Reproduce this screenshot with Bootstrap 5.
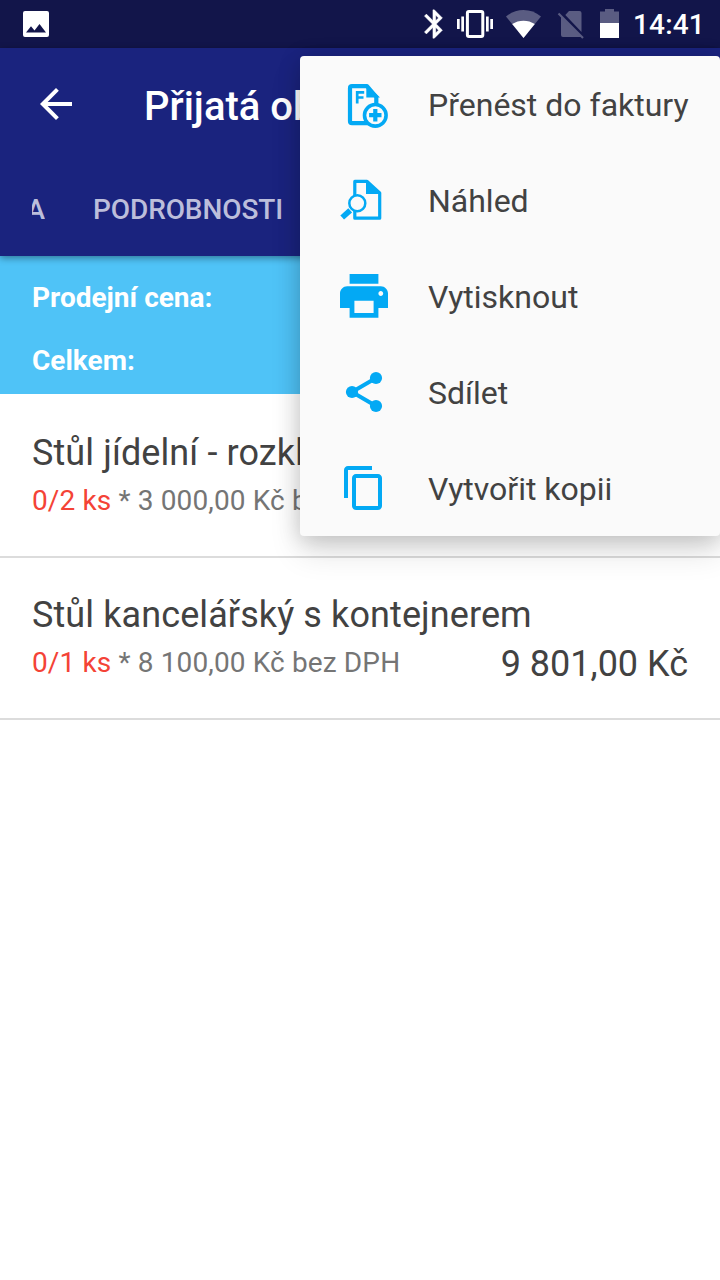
<!DOCTYPE html>
<html lang="cs">
<head>
<meta charset="utf-8">
<meta name="viewport" content="width=device-width, initial-scale=1">
<title>Přijatá objednávka</title>
<link href="https://cdn.jsdelivr.net/npm/bootstrap@5.3.0/dist/css/bootstrap.min.css" rel="stylesheet">
<style>
body{font-family:Roboto,"Noto Sans",sans-serif;color:#424242;width:720px;height:1280px;overflow:hidden;background:#fff}
svg{display:block;flex:none}
.statusbar{height:48px;background:#12154a;color:#fff;padding:0 17px 0 22px}
.clock{font-size:28px;letter-spacing:.15px;font-weight:500;line-height:48px;padding-top:2px;width:70px;white-space:nowrap;margin-left:12px}
.appbar{height:208px;background:#1a237e;color:#fff;box-shadow:0 2px 7px rgba(0,0,0,.4);z-index:1}
.toolbar{height:112px;padding-left:32px;gap:64px}
.screen-title{font-size:40px;font-weight:500;line-height:48px;padding-top:6px}
.tabstrip{height:96px;padding:2px 0 0 32px;font-size:28px;letter-spacing:-.1px;font-weight:500;color:#bcbedb;line-height:96px}
.tab-cut{width:13px;overflow:hidden;direction:rtl}
.tab-next{margin-left:48px}
.totals{height:138px;background:#4fc3f7;color:#fff;font-size:28px;font-weight:700;line-height:33px;padding:25px 32px 0}
.order-row{border-bottom:2px solid #dcdcdc;padding:37px 32px 0}
.item-name{font-size:36px;letter-spacing:.1px;line-height:44px;white-space:nowrap}
.item-sub{font-size:28px;letter-spacing:.13px;line-height:34px;color:#757575;margin-top:9px;white-space:nowrap}
.qty{color:#f44336}
.item-total{font-size:36px;line-height:42px;margin-top:6px}
.popup{top:56px;left:300px;width:420px;height:480px;background:#fafafa;border-radius:4px;z-index:5;box-shadow:0 16px 32px rgba(0,0,0,.12),0 3px 22px rgba(0,0,0,.18)}
.popup-row{height:96px;padding-left:36px;gap:36px;font-size:32px;white-space:nowrap;line-height:40px}
.popup-row span{padding-top:2px}
.popup svg{color:#03a9f4}
</style>
</head>
<body class="position-relative">
<div class="statusbar d-flex align-items-center">
  <svg class="me-auto" width="28" height="28" viewBox="0 0 28 28"><path fill="#fff" fill-rule="evenodd" d="M3 1h22a2 2 0 0 1 2 2v22a2 2 0 0 1-2 2H3a2 2 0 0 1-2-2V3a2 2 0 0 1 2-2zM4 22.500h20L17.500 14l-5 6.500L9 16.200z"/></svg>
  <svg width="20" height="48" viewBox="423 0 20 48"><path fill="#fff" stroke="#fff" stroke-width=".3" transform="translate(417.300 7) scale(1.420)" d="M17.710 7.710L12 2h-1v7.590L6.410 5 5 6.410 10.590 12 5 17.590 6.410 19 11 14.410V22h1l5.710-5.710-4.300-4.290zM13 5.830l1.880 1.880L13 9.590zm1.880 10.460L13 18.170v-3.760z"/></svg>
  <svg class="ms-2" style="margin-right:7px" width="48" height="48" viewBox="451 0 48 48" fill="#fff"><rect x="467.400" y="11.400" width="15.400" height="25.200" rx="1.500" fill="none" stroke="#fff" stroke-width="3"/><path d="M457 19h2.700v10H457zM461.300 16.500h2.700v15h-2.700zM486 16.500h2.700v15H486zM490.300 19h2.700v10h-2.700z"/></svg>
  <svg width="36" height="48" viewBox="506 0 36 48"><path fill="#5a5c82" d="M523.500 38L506 16.500c10-8.600 25-8.600 35 0z"/><path fill="#fff" d="M523.500 38l-11.300-13.900c6.600-4.500 16-4.500 22.600 0z"/></svg>
  <svg style="margin-left:15px" width="28" height="48" viewBox="557 0 28 48"><path fill="#5a5c82" d="M569 11h10.500a2 2 0 0 1 2 2v19L565.300 15zM561 16l21 21h-19a2 2 0 0 1-2-2z"/><path stroke="#5a5c82" stroke-width="2.200" d="M558.500 13.500l24.500 24.500"/></svg>
  <svg style="margin-left:15px;margin-right:2px" width="19" height="48" viewBox="600 0 19 48"><path fill="#5a5c82" d="M600 11.500h5V9h9v2.500h5V23h-19z"/><path fill="#fff" d="M600 23h19v15h-19z"/></svg>
  <span class="clock">14:41</span>
</div>
<header class="appbar position-relative">
  <div class="toolbar d-flex align-items-center">
    <svg width="48" height="48" viewBox="0 0 24 24"><path fill="#fff" d="M20 11H7.830l5.590-5.590L12 4l-8 8 8 8 1.410-1.410L7.830 13H20z"/></svg>
    <div class="screen-title text-nowrap">Přijatá ob</div>
  </div>
  <nav class="tabstrip d-flex"><div class="tab-cut">A</div><div class="tab-next">PODROBNOSTI</div></nav>
</header>
<section class="totals"><div>Prodejní cena:</div><div style="margin-top:30px">Celkem:</div></section>
<main>
  <div class="order-row" style="height:164px">
    <div class="item-name">Stůl jídelní - rozkl</div>
    <div class="item-sub"><span class="qty">0/2 ks</span> * 3 000,00 Kč b</div>
  </div>
  <div class="order-row" style="height:162px;padding-top:35px">
    <div class="item-name">Stůl kancelářský s kontejnerem</div>
    <div class="d-flex justify-content-between"><div class="item-sub"><span class="qty">0/1 ks</span> * 8 100,00 Kč bez DPH</div><div class="item-total">9 801,00 Kč</div></div>
  </div>
</main>
<div class="popup position-absolute">
  <div class="popup-row d-flex align-items-center">
    <svg width="56" height="56" viewBox="0 0 56 56"><path fill="none" stroke="currentColor" stroke-width="4.200" stroke-linejoin="round" d="M31 10.200H16a2 2 0 0 0-2 2v33a2 2 0 0 0 2 2h24.300V21z"/><path fill="currentColor" d="M30.300 8l13.700 13.500H30.300z"/><path fill="none" stroke="currentColor" stroke-width="2.700" d="M21.200 27.500V16.300h7M21.200 21.500h6.300"/><circle cx="39.300" cy="39.300" r="10.800" fill="#fafafa" stroke="currentColor" stroke-width="3.600"/><path stroke="currentColor" stroke-width="4.200" d="M33.100 39.200h12.400M39.300 33v12.400"/></svg>
    <span>Přenést do faktury</span></div>
  <div class="popup-row d-flex align-items-center">
    <svg width="56" height="56" viewBox="0 0 56 56"><path fill="none" stroke="currentColor" stroke-width="3.200" stroke-linejoin="round" d="M31 9.400H18.800v36.800h24.900V21z"/><path fill="currentColor" d="M30 8h1.500L45.200 21.900H30z"/><circle cx="21.300" cy="31.300" r="8" fill="#fafafa" stroke="currentColor" stroke-width="2.500"/><path stroke="currentColor" stroke-width="5.600" d="M14.200 38.300L6.200 45.500"/></svg>
    <span>Náhled</span></div>
  <div class="popup-row d-flex align-items-center">
    <svg width="56" height="56" viewBox="0 0 56 56"><path fill="currentColor" transform="translate(-.8 -1.200) scale(2.400 2.430)" d="M19 8H5c-1.660 0-3 1.340-3 3v6h4v4h12v-4h4v-6c0-1.660-1.340-3-3-3zm-3 11H8v-5h8v5zm3-7c-.55 0-1-.45-1-1s.45-1 1-1 1 .45 1 1-.45 1-1 1zm-1-9H6v4h12V3z"/></svg>
    <span>Vytisknout</span></div>
  <div class="popup-row d-flex align-items-center">
    <svg width="56" height="56" viewBox="0 0 56 56"><path stroke="currentColor" stroke-width="4" fill="none" d="M40 14L16 28l24 14"/><g fill="currentColor"><circle cx="40" cy="14" r="6.100"/><circle cx="16" cy="28" r="6.100"/><circle cx="40" cy="42" r="6.100"/></g></svg>
    <span>Sdílet</span></div>
  <div class="popup-row d-flex align-items-center">
    <svg width="56" height="56" viewBox="0 0 56 56"><path fill="currentColor" transform="translate(4 4) scale(2)" d="M16 1H4c-1.100 0-2 .9-2 2v14h2V3h12V1zm3 4H8c-1.100 0-2 .9-2 2v14c0 1.100.9 2 2 2h11c1.100 0 2-.9 2-2V7c0-1.100-.9-2-2-2zm0 16H8V7h11v14z"/></svg>
    <span>Vytvořit kopii</span></div>
</div>
<script src="https://cdn.jsdelivr.net/npm/bootstrap@5.3.0/dist/js/bootstrap.bundle.min.js"></script>
</body>
</html>
